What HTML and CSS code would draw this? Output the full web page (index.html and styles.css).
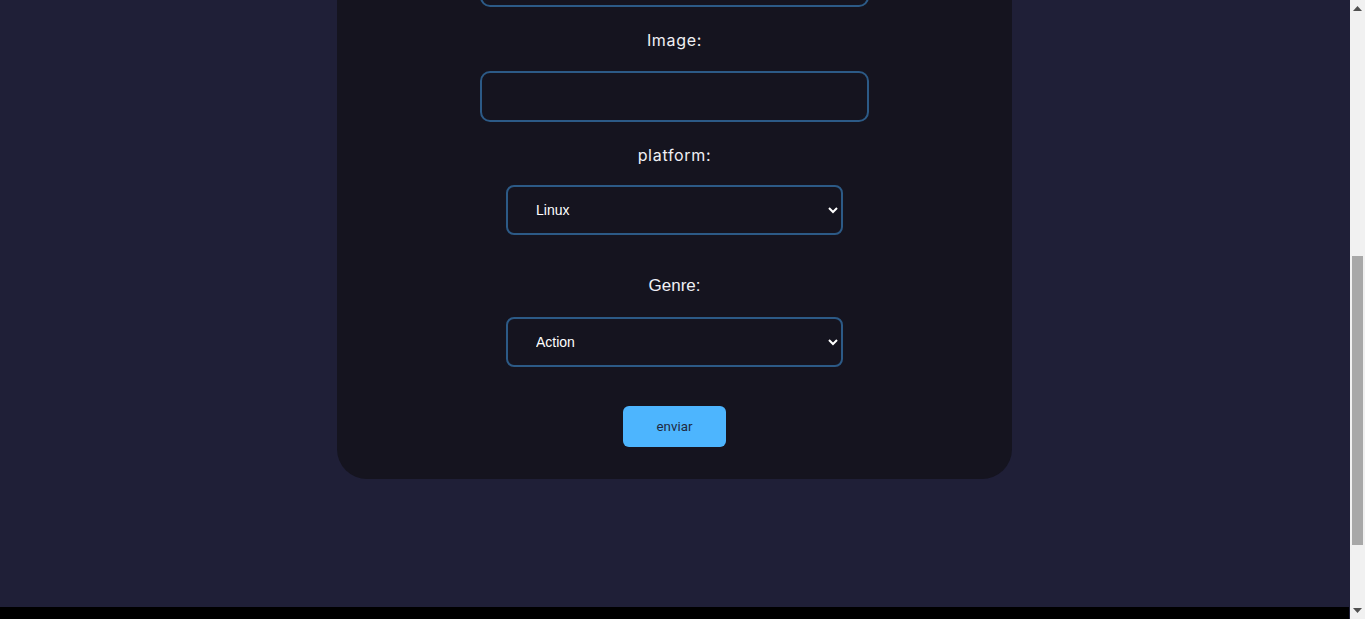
FILE: index.html
```html
<!DOCTYPE html>
<html lang="en">
<head>
<meta charset="utf-8">
<title>Add game</title>
<link rel="stylesheet" href="styles.css">
</head>
<body>
<main class="page">
  <form class="card">
    <input class="text-input first-input" aria-label="Name" type="text">
    <input class="text-input spaced-input" aria-label="Description" type="text">
    <input class="text-input spaced-input" aria-label="Price" type="text">
    <input class="text-input spaced-input" aria-label="Release" type="text">
    <label class="label label-poppins" id="image-label" for="image">Image:</label>
    <input class="text-input" id="image" type="text">
    <label class="label label-poppins label-platform" for="platform">platform:</label>
    <select class="select select-platform" id="platform">
      <option>Linux</option>
      <option>Windows</option>
      <option>Mac</option>
    </select>
    <label class="label label-arial" for="genre">Genre:</label>
    <select class="select" id="genre">
      <option>Action</option>
      <option>Adventure</option>
      <option>RPG</option>
    </select>
    <button class="submit" type="button">enviar</button>
  </form>
</main>
<footer class="footer"></footer>
<div class="scrollbar" aria-hidden="true">
  <div class="sb-button">
    <svg width="9" height="5" viewBox="0 0 9 5"><polygon points="0,5 4.5,0 9,5" fill="#505050"/></svg>
  </div>
  <div class="sb-track">
    <div class="sb-thumb"></div>
  </div>
  <div class="sb-button">
    <svg width="9" height="5" viewBox="0 0 9 5"><polygon points="0,0 4.5,5 9,0" fill="#505050"/></svg>
  </div>
</div>
<script src="script.js"></script>
</body>
</html>
```

FILE: styles.css
```css
html {
  scroll-behavior: auto;
}

body {
  margin: 0;
  padding-right: 16px;
  background: #1f1f37;
  font-family: "Inter", "Noto Sans", sans-serif;
  color: #ececf2;
}

.page {
  padding: 30px 0 128px;
}

.card {
  width: 675px;
  margin: 0 auto;
  background: #15141f;
  border-radius: 30px;
  padding: 72px 0 32px;
  display: flex;
  flex-direction: column;
  align-items: center;
}

.spaced-input {
  margin-top: 64px;
}

.label {
  display: block;
  margin: 21px 0 19px;
  line-height: 24px;
  color: #f0f0f5;
}

.label-platform {
  margin-bottom: 18px;
}

.label-poppins {
  font-family: "Inter", "Noto Sans", sans-serif;
  font-size: 16px;
  font-weight: 400;
  letter-spacing: 0.7px;
}

.label-arial {
  font-family: "Liberation Sans", Arial, sans-serif;
  font-size: 17px;
}

.text-input {
  box-sizing: border-box;
  width: 389px;
  height: 51px;
  border: 2px solid #2c5a86;
  border-radius: 10px;
  background: transparent;
  color: #ffffff;
  padding: 0 16px;
  font-size: 14px;
  outline: none;
}

.select {
  box-sizing: border-box;
  width: 337px;
  height: 50px;
  border: 2px solid #2c5a86;
  border-radius: 8px;
  background: #15141f;
  color: #ffffff;
  padding: 0 0 0 24px;
  font-family: "Liberation Sans", Arial, sans-serif;
  font-size: 14px;
  outline: none;
}

.select-platform {
  margin-bottom: 18px;
}

.submit {
  margin-top: 39px;
  width: 103px;
  height: 41px;
  border: none;
  border-radius: 6px;
  background: #4db5fe;
  color: #1f2a40;
  font-family: "Roboto", sans-serif;
  font-size: 13.333px;
  cursor: pointer;
}

.footer {
  height: 134px;
  background: #000000;
}

.scrollbar {
  position: fixed;
  top: 0;
  right: 0;
  bottom: 0;
  width: 15px;
  background: #f1f1f1;
  display: flex;
  flex-direction: column;
}

.sb-button {
  height: 17px;
  flex: none;
  display: flex;
  align-items: center;
  justify-content: center;
}

.sb-track {
  flex: 1;
  padding-top: 239px;
}

.sb-thumb {
  margin: 0 2px;
  height: 289px;
  background: #a8a8a8;
}
```

FILE: script.js
```js
function placeView() {
  var label = document.getElementById('image-label');
  var top = label.getBoundingClientRect().top + window.scrollY - 28;
  window.scrollTo(0, top);
}
placeView();
window.addEventListener('load', placeView);
```
